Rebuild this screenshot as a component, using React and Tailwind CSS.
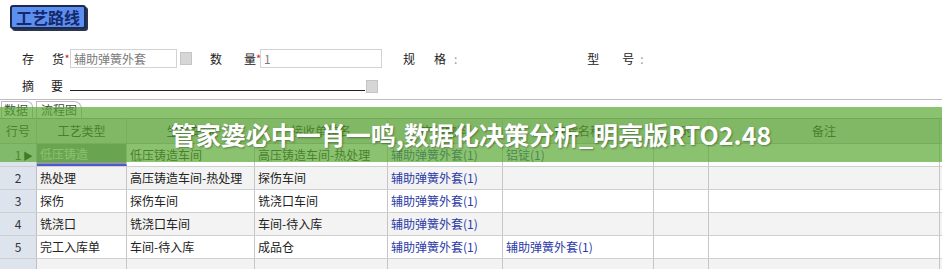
import React from 'react'

const cols = 'grid grid-cols-[37px_90px_128px_133px_115px_151px_55px_231px_1fr]'

const rows = [
  { no: '1', type: '低压铸造', from: '低压铸造车间', to: '高压铸造车间-热处理', out: '辅助弹簧外套(1)', inp: '铝锭(1)', selected: true },
  { no: '2', type: '热处理', from: '高压铸造车间-热处理', to: '探伤车间', out: '辅助弹簧外套(1)', inp: '' },
  { no: '3', type: '探伤', from: '探伤车间', to: '铣浇口车间', out: '辅助弹簧外套(1)', inp: '' },
  { no: '4', type: '铣浇口', from: '铣浇口车间', to: '车间-待入库', out: '辅助弹簧外套(1)', inp: '' },
  { no: '5', type: '完工入库单', from: '车间-待入库', to: '成品仓', out: '辅助弹簧外套(1)', inp: '辅助弹簧外套(1)' },
  { no: '', type: '', from: '', to: '', out: '', inp: '' },
]

function Label({ a, b, w }) {
  return (
    <div className={`flex justify-between ${w}`}>
      <span>{a}</span>
      <span>{b}</span>
    </div>
  )
}

function PickButton({ className = '' }) {
  return <div className={`w-[12px] h-[13px] bg-[#d6d6d6] border border-[#c4c4c4] ${className}`} />
}

export default function App() {
  return (
    <div className="relative w-[942px] h-[269px] overflow-hidden bg-white text-[12px] text-[#222] font-['Noto_Sans_CJK_SC',sans-serif]">
      {/* Title */}
      <div className="pt-[5px] pl-[10px]">
        <div className="w-[76px] h-[24px] rounded-[3px] border-2 border-[#1c2a4f] bg-[#5b8ff0] shadow-[2px_2px_0_#2a3550] flex items-center justify-center text-[16px] font-bold leading-none text-[#16286a]">
          工艺路线
        </div>
      </div>

      {/* Form row 1 */}
      <div className="mt-[20px] pl-[22px] flex items-center h-[19px] leading-none">
        <Label a="存" b="货" w="w-[42px]" />
        <span className="w-[6px] text-[#d02020] text-[11px] text-center">*</span>
        <div className="w-[107px] h-[19px] border border-[#d2d2d2] flex items-center pl-[3px] text-[#7a7a7a]">辅助弹簧外套</div>
        <PickButton className="ml-[3px]" />
        <div className="ml-[18px]"><Label a="数" b="量" w="w-[46px]" /></div>
        <span className="w-[4px] text-[#d02020] text-[11px]">*</span>
        <div className="w-[122px] h-[19px] border border-[#d2d2d2] flex items-center pl-[3px] text-[#7a7a7a]">1</div>
        <div className="ml-[21px] flex items-center">
          <Label a="规" b="格" w="w-[43px]" />
          <span className="ml-[8px] text-[#999]">:</span>
        </div>
        <div className="ml-[130px] flex items-center">
          <Label a="型" b="号" w="w-[47px]" />
          <span className="ml-[6px] text-[#999]">:</span>
        </div>
      </div>

      {/* Form row 2 */}
      <div className="mt-[9px] pl-[22px] flex items-center h-[18px] leading-none">
        <Label a="摘" b="要" w="w-[41px]" />
        <div className="ml-[7px] w-[295px] h-[14px] border-b border-[#222] self-start" />
        <PickButton className="ml-[1px]" />
      </div>

      <div className="mt-[4px] h-px bg-[#bdbdbd]" />

      {/* Tabs */}
      <div className="h-[18px] flex items-end pl-[1px] leading-none whitespace-nowrap">
        <div className="h-[17px] w-[32px] pl-[2px] border-l border-t border-r border-[#bbb] rounded-tr-[6px] flex items-center text-[#444]">数据</div>
        <div className="ml-[3px] h-[17px] w-[46px] pl-[4px] border-l border-t border-r border-[#bbb] rounded-tr-[8px] flex items-center text-[#444]">流程图</div>
      </div>

      {/* Grid */}
      <div className="border-t border-[#a8a8a8]">
        <div className={`${cols} h-[25px] bg-[#dcdcdc] border-b border-[#b8b8b8] text-[#1e1e1e]`}>
          <div className="flex items-center justify-center border-r border-[#c0c0c0]">行号</div>
          <div className="flex items-center justify-center border-r border-[#c0c0c0]">工艺类型</div>
          <div className="flex items-center justify-center border-r border-[#c0c0c0]">生产车间</div>
          <div className="flex items-center justify-center border-r border-[#c0c0c0]">接收单位名</div>
          <div className="flex items-center justify-center border-r border-[#c0c0c0]">产出物料</div>
          <div className="flex items-center justify-center border-r border-[#c0c0c0]">存货名称</div>
          <div className="flex items-center justify-center border-r border-[#c0c0c0]">工时</div>
          <div className="flex items-center justify-center border-r border-[#c0c0c0]">备注</div>
          <div />
        </div>
        {rows.map((r, i) => (
          <div key={i} className={`${cols} h-[23px] border-b border-[#cfcfcf] ${i % 2 === 1 ? 'bg-[#f3f3f3]' : 'bg-white'}`}>
            <div className="relative flex items-center justify-center bg-[#dde4ee] border-r border-[#c0c0c0] text-[#333]">
              {r.no}
              {r.selected && <span className="absolute right-[3px] text-[10px] text-[#111]">▶</span>}
            </div>
            <div className={`flex items-center pl-[3px] border-r border-[#c6c6c6] ${r.selected ? 'bg-[#8e9a96] text-white border-b-2 border-b-[#4a5ad0]' : ''}`}>{r.type}</div>
            <div className="flex items-center pl-[3px] border-r border-[#c6c6c6]">{r.from}</div>
            <div className="flex items-center pl-[3px] border-r border-[#c6c6c6]">{r.to}</div>
            <div className="flex items-center pl-[3px] border-r border-[#c6c6c6] text-[#2a3aa6]">{r.out}</div>
            <div className="flex items-center pl-[3px] border-r border-[#c6c6c6] text-[#2a3aa6]">{r.inp}</div>
            <div className="border-r border-[#c6c6c6]" />
            <div className="border-r border-[#c6c6c6]" />
            <div />
          </div>
        ))}
      </div>

      {/* Banner overlay */}
      <div className="absolute left-0 right-0 top-[107px] h-[55px] bg-[#5aa832]/70 flex items-center justify-center">
        <span className="text-white text-[25px] font-bold leading-none [text-shadow:1px_1px_2px_rgba(0,0,0,0.35)]">
          管家婆必中一肖一鸣,数据化决策分析_明亮版RTO2.48
        </span>
      </div>
    </div>
  )
}
